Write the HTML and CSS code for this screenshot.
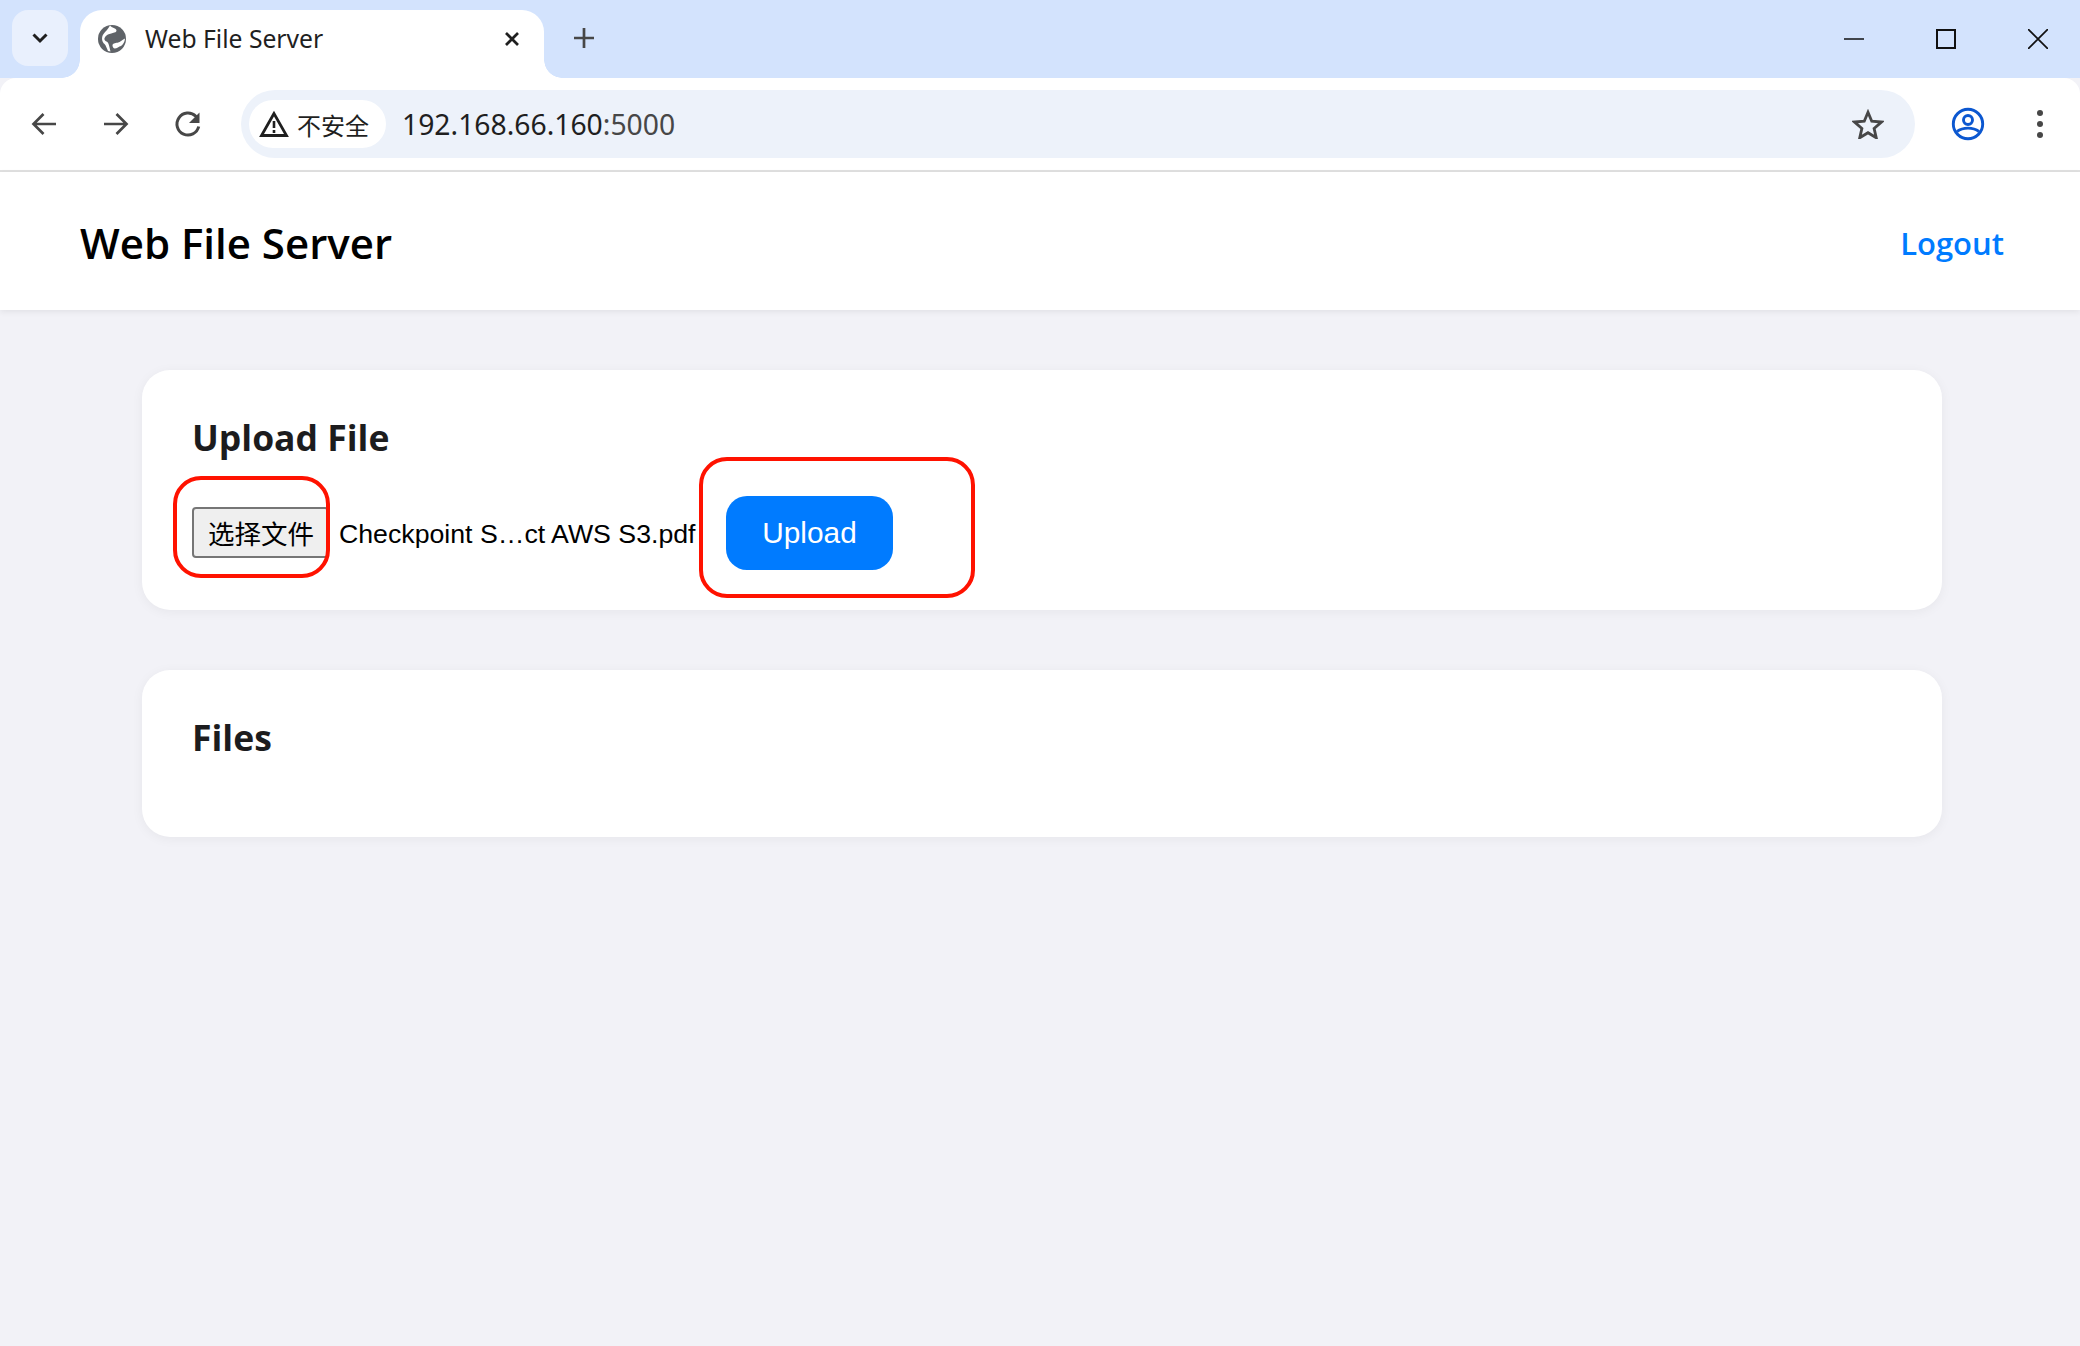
FILE: index.html
```html
<!DOCTYPE html>
<html lang="zh">
<head>
<meta charset="utf-8">
<title>Web File Server</title>
<link rel="stylesheet" href="styles.css">
</head>
<body>
<div class="tabstrip">
  <div class="tab-search"><svg width="20" height="20" viewBox="0 0 20 20"><path d="M3.500 6.500l6.500 6.500 6.500-6.500" fill="none" stroke="#1f1f1f" stroke-width="3"/></svg></div>
  <div class="tab">
    <svg class="favicon" width="30" height="30" viewBox="0 0 30 30"><circle cx="15" cy="15" r="14" fill="#5f6368"/><path d="M13 1.500C14.500 4 19.500 4 19.500 6.500 19.500 9.500 13 8.500 9.500 11.500 7 13.700 6.500 16 9.500 17.500 12 18.800 12 22 13.500 27.500L11 27C9.500 24 9 21.500 7.500 20 5 18 4 13.500 6.500 10 8.500 7 11 5.500 13 1.500z" fill="#fff"/><path d="M28 14.500C25.500 15.500 23.500 18.200 20.500 18.700 18 19 15.500 19.500 15.500 21.500 15.500 23 16.500 24.500 17.800 24.500 19.800 24.500 22 22.500 24 22 26 20.500 27.800 18 28 14.500z" fill="#fff"/></svg>
    <span class="tab-title">Web File Server</span>
    <svg class="tab-close" width="20" height="20" viewBox="0 0 20 20"><path d="M4 4l12 12M16 4L4 16" stroke="#1f1f1f" stroke-width="2.700"/></svg>
  </div>
  <svg class="new-tab" width="24" height="24" viewBox="0 0 24 24"><path d="M12 2v20M2 12h20" stroke="#474747" stroke-width="2.700"/></svg>
  <div class="window-controls">
    <svg width="20" height="20" viewBox="0 0 20 20"><path d="M0 10h20" stroke="#111" stroke-width="1.500"/></svg>
    <svg width="20" height="20" viewBox="0 0 20 20"><rect x="1" y="1" width="18" height="18" fill="none" stroke="#111" stroke-width="2"/></svg>
    <svg width="20" height="20" viewBox="0 0 20 20"><path d="M0 0l20 20M20 0L0 20" stroke="#111" stroke-width="1.700"/></svg>
  </div>
</div>
<div class="toolbar">
  <svg class="nav-icon" width="28" height="28" viewBox="0 0 28 28"><path d="M26 14H4M13.500 4L3.500 14l10 10" fill="none" stroke="#474747" stroke-width="2.700"/></svg>
  <svg class="nav-icon" width="28" height="28" viewBox="0 0 28 28"><path d="M2 14h22M14.500 4l10 10-10 10" fill="none" stroke="#474747" stroke-width="2.700"/></svg>
  <svg class="nav-icon" width="28" height="28" viewBox="0 0 28 28"><path d="M24.700 16.500A11 11 0 1 1 21.800 6.300L24 9" fill="none" stroke="#474747" stroke-width="3"/><path d="M25.500 2.500v10.500H15z" fill="#474747"/></svg>
  <div class="omnibox">
    <div class="chip">
      <svg width="30" height="28" viewBox="0 0 30 28"><path d="M15 3.500L2.500 25.500h25z" fill="none" stroke="#1f1f1f" stroke-width="2.800"/><path d="M15 11v7M15 20v3" stroke="#1f1f1f" stroke-width="2.600"/></svg>
      <span class="chip-text">不安全</span>
    </div>
    <div class="url">192.168.66.160<span class="url-port">:5000</span></div>
    <svg class="star" width="32" height="30" viewBox="0 0 34 32"><path d="M17 3.500l4 9.500 10.300.9-7.800 6.800 2.300 10L17 25.300 8.200 30.700l2.300-10-7.800-6.800 10.300-.9z" fill="none" stroke="#474747" stroke-width="3"/></svg>
  </div>
  <svg class="avatar" width="34" height="34" viewBox="0 0 34 34"><circle cx="17" cy="17" r="14.700" fill="none" stroke="#0b57d0" stroke-width="2.900"/><circle cx="17" cy="13" r="4.500" fill="none" stroke="#0b57d0" stroke-width="2.900"/><path d="M6 24.500c6-4.500 16-4.500 22 0" fill="none" stroke="#0b57d0" stroke-width="2.900"/></svg>
  <div class="menu-dots"><i></i><i></i><i></i></div>
</div>
<div class="page">
  <header class="site-header">
    <h1 class="site-title">Web File Server</h1>
    <a class="logout" href="#">Logout</a>
  </header>
  <main class="content">
    <section class="card card-upload">
      <h2 class="card-title">Upload File</h2>
      <form class="upload-form">
        <button type="button" class="file-btn">选择文件</button>
        <span class="file-name">Checkpoint S…ct AWS S3.pdf</span>
        <button type="button" class="upload-btn">Upload</button>
        <span class="ring ring-file"></span>
        <span class="ring ring-upload"></span>
      </form>
    </section>
    <section class="card card-files">
      <h2 class="card-title">Files</h2>
    </section>
  </main>
</div>
</body>
</html>
```
FILE: styles.css
```css
* { box-sizing: border-box; }
html, body { margin: 0; height: 100%; }
body { width: 2080px; height: 1346px; overflow: hidden; background: #f2f2f7; display: flex; flex-direction: column; font-family: "Open Sans", "Noto Sans CJK SC", sans-serif; }

.tabstrip { height: 78px; flex: none; background: #d3e3fd; display: flex; align-items: flex-start; padding: 10px 0 0 12px; }
.tab-search { width: 56px; height: 56px; border-radius: 16px; background: #e9f0fd; display: flex; align-items: center; justify-content: center; }
.tab { position: relative; width: 464px; height: 68px; margin-left: 12px; background: #fff; border-radius: 22px 22px 0 0; display: flex; align-items: center; padding: 0 22px 10px 17px; }
.tab::before, .tab::after { content: ""; position: absolute; bottom: 0; width: 18px; height: 18px; }
.tab::before { left: -18px; background: radial-gradient(circle at 0 0, transparent 17.500px, #fff 18px); }
.tab::after { right: -18px; background: radial-gradient(circle at 100% 0, transparent 17.500px, #fff 18px); }
.favicon { flex: none; }
.tab-title { margin-left: 18px; margin-top: -1px; font-size: 24.700px; color: #1f1f1f; flex: 1; white-space: nowrap; font-family: "Noto Sans", sans-serif; }
.tab-close { flex: none; }
.new-tab { margin: 16px 0 0 28px; }
.window-controls { margin-left: auto; margin-top: 19px; padding-right: 32px; display: flex; gap: 72px; }

.toolbar { height: 94px; flex: none; background: #fff; border-bottom: 2px solid #e0e0e0; border-radius: 16px 16px 0 0; display: flex; align-items: center; padding: 0 0 0 30px; }
.nav-icon { flex: none; margin-right: 44px; }
.nav-icon:nth-child(3) { margin-right: 39px; }
.omnibox { flex: none; width: 1674px; height: 68px; border-radius: 34px; background: #edf2fa; display: flex; align-items: center; padding: 0 31px 0 8px; }
.chip { height: 48px; width: 137px; flex: none; border-radius: 24px; background: #fff; display: flex; align-items: center; padding-left: 10px; gap: 8px; }
.chip-text { font-size: 24px; color: #1f1f1f; font-family: "Noto Sans CJK SC", sans-serif; }
.url { margin-left: 16px; font-size: 28.300px; color: #1f1f1f; font-family: "Noto Sans", sans-serif; white-space: nowrap; }
.url-port { color: #474747; }
.star { margin-left: auto; }
.avatar { flex: none; margin-left: 36px; }
.menu-dots { flex: none; margin-left: 52px; display: flex; flex-direction: column; gap: 5px; }
.menu-dots i { display: block; width: 6px; height: 6px; border-radius: 50%; background: #474747; }

.page { flex: 1; display: flex; flex-direction: column; }
.site-header { height: 138px; flex: none; background: #fff; box-shadow: 0 2px 6px rgba(0,0,0,.07); display: flex; align-items: center; justify-content: space-between; padding: 2px 76px 0 80px; }
.site-title { margin: 0; font-size: 42px; font-weight: 600; color: #000; }
.logout { font-size: 31px; font-weight: 600; color: #007bff; text-decoration: none; margin-top: 2px; }

.content { padding: 60px 138px 0 142px; display: flex; flex-direction: column; gap: 60px; }
.card { background: #fff; border-radius: 28px; box-shadow: 0 2px 12px rgba(0,0,0,.05); padding: 44px 50px 0 50px; }
.card-upload { height: 240px; }
.card-files { height: 167px; }
.card-title { margin: 0; font-size: 35.500px; line-height: 46px; font-weight: 700; color: #1c1c1e; }

.upload-form { position: relative; margin-top: 36px; display: flex; align-items: center; height: 74px; }
.file-btn { width: 137px; height: 51px; margin-top: -2px; flex: none; padding: 0 0 0 1px; background: #efefef; border: 2px solid #767676; border-radius: 4px; font-size: 26.500px; color: #000; font-family: "Noto Sans CJK SC", sans-serif; }
.file-name { margin-left: 10px; padding-top: 2px; font-size: 26.700px; color: #000; font-family: "Liberation Sans", sans-serif; white-space: nowrap; width: 387px; }
.upload-btn { width: 167px; height: 74px; flex: none; border: 0; border-radius: 21px; background: #007bff; color: #fff; font-size: 29.800px; font-family: "Liberation Sans", sans-serif; }
.ring { position: absolute; border: 4px solid #ff1200; border-radius: 28px; }
.ring-file { left: -19px; top: -20px; width: 157px; height: 102px; }
.ring-upload { left: 507px; top: -39px; width: 276px; height: 141px; }
```
